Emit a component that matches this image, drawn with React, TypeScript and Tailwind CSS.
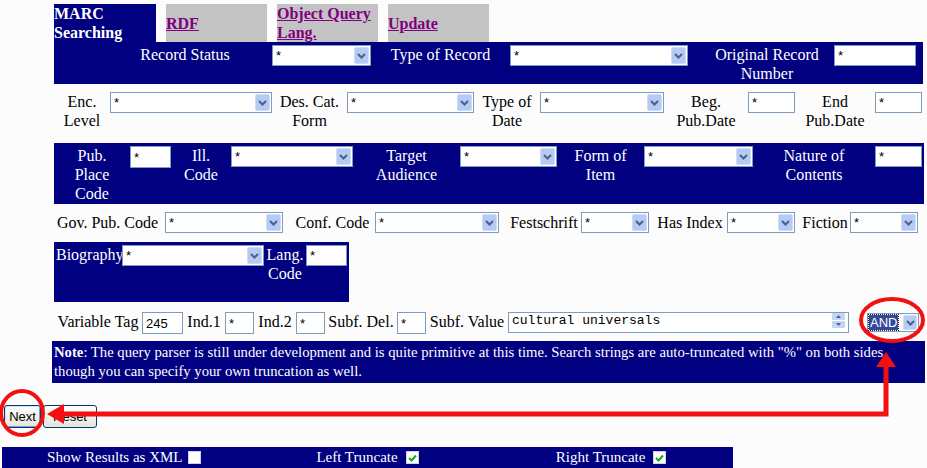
import React from "react";

function Chevron() {
  return (
    <svg width="9" height="6" viewBox="0 0 9 6">
      <path d="M1 1 L4.5 4.5 L8 1" stroke="#4d6185" strokeWidth="2" fill="none" />
    </svg>
  );
}

function Sel({ w, v = "*" }: { w: string; v?: string }) {
  return (
    <div className={`${w} h-[21px] shrink-0 flex border border-[#7f9db9] bg-white`}>
      <div className="flex-1 flex items-center pl-[3px] text-[13px] leading-[15px] text-black font-['Liberation_Sans',Arial,sans-serif]">
        {v}
      </div>
      <div className="w-[15px] m-[1px] rounded-[2px] bg-[#b5caf4] border border-[#cfdcf8] flex items-center justify-center">
        <Chevron />
      </div>
    </div>
  );
}

function Inp({ w, v = "*", h = "h-[21px]" }: { w: string; v?: string; h?: string }) {
  return (
    <div
      className={`${w} ${h} shrink-0 border border-[#7f9db9] bg-white flex items-center pl-[3px] text-[13px] leading-[15px] text-black font-['Liberation_Sans',Arial,sans-serif]`}
    >
      {v}
    </div>
  );
}

function Lbl({ w, children, extra = "" }: { w: string; children: React.ReactNode; extra?: string }) {
  return <div className={`${w} ${extra} shrink-0 text-center whitespace-nowrap`}>{children}</div>;
}

function Cb({ checked }: { checked?: boolean }) {
  return (
    <div className="w-[13px] h-[13px] bg-white border border-[#c8d4e0] flex items-center justify-center">
      {checked && (
        <svg width="9" height="8" viewBox="0 0 9 8">
          <path d="M1 4 L3.5 6.5 L8 1.5" stroke="#21a121" strokeWidth="2" fill="none" />
        </svg>
      )}
    </div>
  );
}

export default function App() {
  return (
    <div className="relative w-[927px] h-[468px] overflow-hidden bg-[#fcfcfc] font-['Liberation_Serif','Times_New_Roman',serif] text-[16px] leading-[19px] text-black">
      <div className="flex flex-col pt-[4px]">
        {/* Tabs */}
        <div className="flex ml-[54px] h-[38px] gap-[10px]">
          <div className="w-[102px] bg-[#000080] text-white font-bold leading-[19px]">
            MARC
            <br />
            Searching
          </div>
          <div className="w-[101px] bg-[#c3c3c3] flex items-center">
            <span className="text-[#800080] underline font-bold">RDF</span>
          </div>
          <div className="w-[101px] bg-[#c3c3c3]">
            <span className="text-[#800080] underline font-bold leading-[19px]">
              Object Query
              <br />
              Lang.
            </span>
          </div>
          <div className="w-[101px] bg-[#c3c3c3] flex items-center">
            <span className="text-[#800080] underline font-bold">Update</span>
          </div>
        </div>

        {/* Row 1 */}
        <div className="flex items-start ml-[54px] w-[869px] h-[42px] bg-[#000080] text-white pt-[3px]">
          <Lbl w="w-[130px]" extra="ml-[66px] mr-[22px]">Record Status</Lbl>
          <Sel w="w-[99px]" />
          <Lbl w="w-[139px]">Type of Record</Lbl>
          <Sel w="w-[178px]" />
          <Lbl w="w-[146px]" extra="pl-[12px]">
            Original Record
            <br />
            Number
          </Lbl>
          <Inp w="w-[82px]" />
        </div>

        {/* Row 2 */}
        <div className="flex items-start ml-[54px] h-[59px] pt-[8px]">
          <Lbl w="w-[56px]">
            Enc.
            <br />
            Level
          </Lbl>
          <Sel w="w-[162px]" />
          <Lbl w="w-[75px]">
            Des. Cat.
            <br />
            Form
          </Lbl>
          <Sel w="w-[127px]" />
          <Lbl w="w-[66px]">
            Type of
            <br />
            Date
          </Lbl>
          <Sel w="w-[124px]" />
          <Lbl w="w-[84px]">
            Beg.
            <br />
            Pub.Date
          </Lbl>
          <Inp w="w-[47px]" />
          <Lbl w="w-[80px]">
            End
            <br />
            Pub.Date
          </Lbl>
          <Inp w="w-[47px]" />
        </div>

        {/* Row 3 */}
        <div className="flex items-start ml-[54px] w-[870px] h-[61px] bg-[#000080] text-white pt-[3px]">
          <Lbl w="w-[76px]">
            Pub.
            <br />
            Place
            <br />
            Code
          </Lbl>
          <Inp w="w-[41px]" h="h-[22px]" />
          <Lbl w="w-[60px]">
            Ill.
            <br />
            Code
          </Lbl>
          <Sel w="w-[122px]" />
          <Lbl w="w-[107px]">
            Target
            <br />
            Audience
          </Lbl>
          <Sel w="w-[97px]" />
          <Lbl w="w-[87px]">
            Form of
            <br />
            Item
          </Lbl>
          <Sel w="w-[109px]" />
          <Lbl w="w-[122px]">
            Nature of
            <br />
            Contents
          </Lbl>
          <Inp w="w-[47px]" />
        </div>

        {/* Row 4 */}
        <div className="flex items-start ml-[54px] h-[38px] pt-[8px]">
          <Lbl w="w-[111px]" extra="pr-[4px] leading-[21px]">Gov. Pub. Code</Lbl>
          <Sel w="w-[118px]" />
          <Lbl w="w-[92px]" extra="pl-[7px] leading-[21px]">Conf. Code</Lbl>
          <Sel w="w-[124px]" />
          <Lbl w="w-[82px]" extra="pl-[8px] leading-[21px]">Festschrift</Lbl>
          <Sel w="w-[68px]" />
          <Lbl w="w-[78px]" extra="pl-[4px] leading-[21px]">Has Index</Lbl>
          <Sel w="w-[68px]" />
          <Lbl w="w-[55px]" extra="pl-[5px] leading-[21px]">Fiction</Lbl>
          <Sel w="w-[68px]" />
        </div>

        {/* Row 5 */}
        <div className="flex items-start ml-[54px] w-[295px] h-[60px] bg-[#000080] text-white pt-[3px]">
          <div className="w-[68px] shrink-0 pl-[2px] whitespace-nowrap">Biography</div>
          <Sel w="w-[142px]" />
          <Lbl w="w-[42px]">
            Lang.
            <br />
            Code
          </Lbl>
          <Inp w="w-[41px]" />
        </div>

        {/* Row 6 */}
        <div className="flex items-start ml-[54px] h-[39px] pt-[10px]">
          <Lbl w="w-[88px]">Variable Tag</Lbl>
          <Inp w="w-[41px]" h="h-[22px]" v="245" />
          <Lbl w="w-[42px]">Ind.1</Lbl>
          <Inp w="w-[29px]" h="h-[22px]" />
          <Lbl w="w-[42px]">Ind.2</Lbl>
          <Inp w="w-[29px]" h="h-[22px]" />
          <Lbl w="w-[72px]">Subf. Del.</Lbl>
          <Inp w="w-[29px]" h="h-[22px]" />
          <Lbl w="w-[82px]">Subf. Value</Lbl>
          <div className="w-[341px] h-[21px] shrink-0 border border-[#7f9db9] bg-white flex items-start justify-between">
            <div className="pl-[3px] text-[13px] leading-[16px] font-['Liberation_Mono','Courier_New',monospace] whitespace-pre">
              cultural universals
            </div>
            <div className="flex flex-col mr-[3px] mt-0 gap-[1px]">
              <div className="w-[13px] h-[7px] rounded-[1px] bg-[#c3d4f6] flex items-center justify-center">
                <svg width="5" height="3" viewBox="0 0 5 3">
                  <path d="M0 3 L2.5 0 L5 3 Z" fill="#4d6185" />
                </svg>
              </div>
              <div className="w-[13px] h-[7px] rounded-[1px] bg-[#c3d4f6] flex items-center justify-center">
                <svg width="5" height="3" viewBox="0 0 5 3">
                  <path d="M0 0 L2.5 3 L5 0 Z" fill="#4d6185" />
                </svg>
              </div>
            </div>
          </div>
          <div className="w-[18px] shrink-0" />
          <div className="w-[52px] h-[19px] mt-[1px] shrink-0 flex items-stretch border border-[#7f9db9] bg-white">
            <div className="flex-1 flex items-stretch p-[1px]">
              <span className="flex items-center px-[1px] bg-[#33489c] text-white text-[13px] leading-[15px] font-['Liberation_Sans',Arial,sans-serif] outline-dotted outline-1 outline-[#222]">
                AND
              </span>
            </div>
            <div className="w-[14px] m-[1px] rounded-[2px] bg-[#b5caf4] border border-[#cfdcf8] flex items-center justify-center">
              <Chevron />
            </div>
          </div>
        </div>

        {/* Note */}
        <div className="ml-[52px] w-[873px] h-[42px] bg-[#000080] text-white pl-[2px] pt-[2px] text-[14.7px] leading-[19px] whitespace-nowrap">
          <b>Note</b>: The query parser is still under development and is quite primitive at this time. Search strings
          are auto-truncated with "%" on both sides,
          <br />
          though you can specify your own truncation as well.
        </div>

        {/* Buttons */}
        <div className="flex ml-[4px] mt-[22px] h-[23px] gap-[2px]">
          <div className="w-[37px] h-[23px] rounded-[3px] border border-[#003c74] bg-linear-to-b from-white to-[#e6e4da] shadow-[inset_-1px_-1px_0_#7a9be0,inset_1px_1px_0_#cfe0fa] flex items-center justify-center text-[13px] font-['Liberation_Sans',Arial,sans-serif]">
            Next
          </div>
          <div className="w-[54px] h-[23px] rounded-[3px] border border-[#003c74] bg-linear-to-b from-white to-[#e6e4da] flex items-center justify-center text-[13px] font-['Liberation_Sans',Arial,sans-serif]">
            Reset
          </div>
        </div>

        {/* Bottom bar */}
        <div className="ml-[2px] mt-[19px] w-[731px] h-[21px] bg-[#000080] text-white text-[15px] grid grid-cols-3">
          <div className="flex items-center justify-center gap-[5px]">
            <span>Show Results as XML</span>
            <Cb />
          </div>
          <div className="flex items-center justify-center gap-[8px]">
            <span>Left Truncate</span>
            <Cb checked />
          </div>
          <div className="flex items-center justify-center gap-[8px]">
            <span>Right Truncate</span>
            <Cb checked />
          </div>
        </div>
      </div>

      {/* Red annotation overlay */}
      <svg className="absolute left-0 top-0 pointer-events-none" width="927" height="468" viewBox="0 0 927 468">
        <ellipse cx="892" cy="320" rx="31" ry="21" stroke="#f21010" strokeWidth="4" fill="none" />
        <ellipse cx="22" cy="413" rx="21" ry="22" stroke="#f21010" strokeWidth="4" fill="none" />
        <path d="M886 364 L886 414 L62 414" stroke="#f21010" strokeWidth="5" fill="none" strokeLinejoin="miter" />
        <polygon points="886,352 876,367 896,367" fill="#f21010" />
        <polygon points="47,414 64,404 64,424" fill="#f21010" />
      </svg>
    </div>
  );
}
